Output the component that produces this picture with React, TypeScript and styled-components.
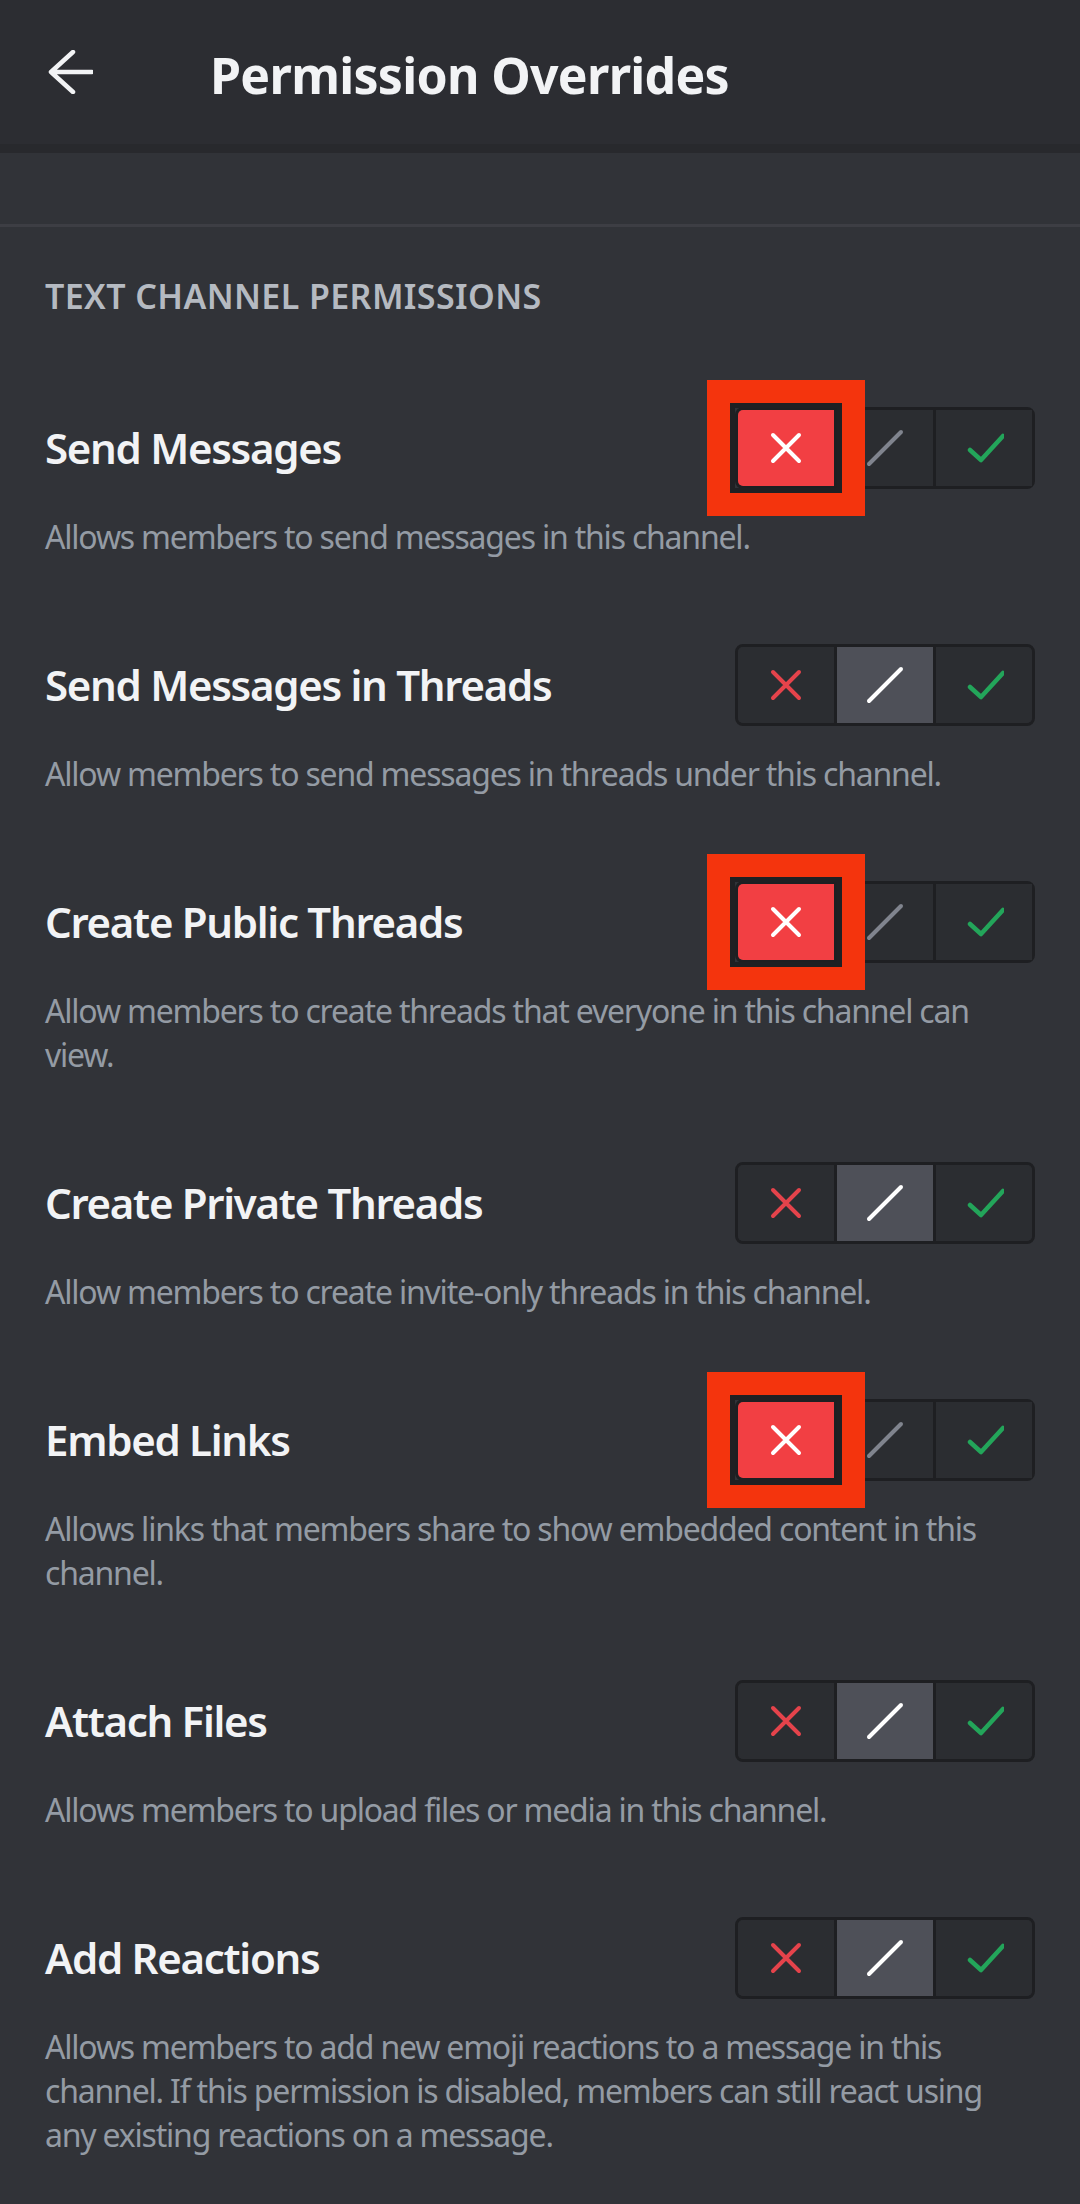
import React from 'react';
import styled, { createGlobalStyle } from 'styled-components';

const GlobalStyle = createGlobalStyle`
  html, body {
    margin: 0;
    padding: 0;
    background: #313338;
    overflow: hidden;
  }
  body {
    font-family: "Noto Sans", "DejaVu Sans", sans-serif;
    -webkit-font-smoothing: antialiased;
  }
  * { box-sizing: border-box; }
`;

const Screen = styled.div`
  width: 1080px;
  height: 2204px;
  overflow: hidden;
  background: #313338;
  display: flex;
  flex-direction: column;
`;

const TopBar = styled.header`
  height: 153px;
  flex-shrink: 0;
  background: #2c2d32;
  border-bottom: 9px solid #28292d;
  display: flex;
  align-items: center;
  padding-left: 48px;
  gap: 117px;
`;

const BackButton = styled.button`
  width: 45px;
  height: 44px;
  padding: 0;
  border: none;
  background: transparent;
  display: flex;
  align-items: center;
  justify-content: center;
  cursor: pointer;
`;

const PageTitle = styled.h1`
  margin: 0;
  font-size: 50px;
  line-height: 60px;
  font-weight: 700;
  color: #f2f3f5;
  letter-spacing: -0.7px;
  transform: translateY(3px);
`;

const Divider = styled.div`
  height: 74px;
  flex-shrink: 0;
  border-bottom: 3px solid #3d3e44;
`;

const Section = styled.section`
  padding: 0 45px;
  display: flex;
  flex-direction: column;
`;

const SectionLabel = styled.h2`
  margin: 49px 0 0;
  font-size: 34px;
  line-height: 40px;
  font-weight: 600;
  color: #b5bac1;
  text-transform: uppercase;
  letter-spacing: 0.4px;
`;

const List = styled.div`
  margin-top: 91px;
  display: flex;
  flex-direction: column;
`;

const Row = styled.div`
  padding-bottom: 85px;
  display: flex;
  flex-direction: column;
`;

const RowHead = styled.div`
  height: 82px;
  display: flex;
  align-items: center;
  justify-content: space-between;
`;

const RowTitle = styled.div`
  font-size: 42px;
  line-height: 52px;
  font-weight: 600;
  color: #f2f3f5;
  letter-spacing: -1.3px;
`;

const RowDesc = styled.p`
  margin: 26px 0 0;
  font-size: 32px;
  line-height: 44px;
  font-weight: 400;
  color: #949ba4;
  letter-spacing: -1.2px;
`;

const ToggleGroup = styled.div`
  position: relative;
  width: 300px;
  height: 82px;
  flex-shrink: 0;
  display: flex;
  border: 3px solid #1e1f22;
  border-radius: 8px;
  background: #2b2d31;
`;

type Tone = 'deny' | 'neutral' | 'allow';

const Segment = styled.div<{ $active: boolean; $tone: Tone }>`
  flex: 1;
  display: flex;
  align-items: center;
  justify-content: center;
  background: ${(p) =>
    !p.$active ? '#2b2d31' : p.$tone === 'deny' ? '#f23f43' : p.$tone === 'allow' ? '#23a55a' : '#4e5058'};
  & + & {
    border-left: 3px solid #1e1f22;
  }
  &:first-child {
    border-radius: 5px 0 0 5px;
  }
  &:last-child {
    border-radius: 0 5px 5px 0;
  }
`;

const Highlight = styled.div`
  position: absolute;
  left: -31px;
  top: -30px;
  width: 158px;
  height: 136px;
  border: 23px solid #f4340d;
  box-shadow: inset 0 0 0 5px #1f2023;
  pointer-events: none;
`;

const XIcon = ({ color }: { color: string }) => (
  <svg width="40" height="40" viewBox="0 0 40 40" fill="none">
    <path d="M7 7 L33 33 M33 7 L7 33" stroke={color} strokeWidth="4" strokeLinecap="round" />
  </svg>
);

const SlashIcon = ({ color }: { color: string }) => (
  <svg width="40" height="40" viewBox="0 0 40 40" fill="none">
    <path d="M4 36 L36 4" stroke={color} strokeWidth="4" strokeLinecap="round" />
  </svg>
);

const CheckIcon = ({ color }: { color: string }) => (
  <svg width="40" height="40" viewBox="0 0 40 40" fill="none">
    <path d="M6 22 L17 32 L39 8" stroke={color} strokeWidth="4.5" strokeLinecap="round" strokeLinejoin="round" />
  </svg>
);

const BackArrow = () => (
  <svg width="45" height="44" viewBox="0 0 45 44" fill="none">
    <path d="M25 2 L3 22 L25 42 M3 22 L44 22" stroke="#f2f3f5" strokeWidth="4.5" strokeLinecap="round" strokeLinejoin="round" />
  </svg>
);

type Perm = { title: string; desc: string; value: 'deny' | 'neutral' };

const perms: Perm[] = [
  { title: 'Send Messages', desc: 'Allows members to send messages in this channel.', value: 'deny' },
  { title: 'Send Messages in Threads', desc: 'Allow members to send messages in threads under this channel.', value: 'neutral' },
  { title: 'Create Public Threads', desc: 'Allow members to create threads that everyone in this channel can view.', value: 'deny' },
  { title: 'Create Private Threads', desc: 'Allow members to create invite-only threads in this channel.', value: 'neutral' },
  { title: 'Embed Links', desc: 'Allows links that members share to show embedded content in this channel.', value: 'deny' },
  { title: 'Attach Files', desc: 'Allows members to upload files or media in this channel.', value: 'neutral' },
  {
    title: 'Add Reactions',
    desc: 'Allows members to add new emoji reactions to a message in this channel. If this permission is disabled, members can still react using any existing reactions on a message.',
    value: 'neutral',
  },
];

const PermToggle = ({ value }: { value: 'deny' | 'neutral' }) => {
  const denied = value === 'deny';
  return (
    <ToggleGroup>
      <Segment $tone="deny" $active={denied}>
        <XIcon color={denied ? '#ffffff' : '#e5434b'} />
      </Segment>
      <Segment $tone="neutral" $active={!denied}>
        <SlashIcon color={denied ? '#80848e' : '#ffffff'} />
      </Segment>
      <Segment $tone="allow" $active={false}>
        <CheckIcon color="#23a55a" />
      </Segment>
      {denied && <Highlight />}
    </ToggleGroup>
  );
};

export default function App() {
  return (
    <>
      <GlobalStyle />
      <Screen>
        <TopBar>
          <BackButton aria-label="Back">
            <BackArrow />
          </BackButton>
          <PageTitle>Permission Overrides</PageTitle>
        </TopBar>
        <Divider />
        <Section>
          <SectionLabel>Text Channel Permissions</SectionLabel>
          <List>
            {perms.map((p) => (
              <Row key={p.title}>
                <RowHead>
                  <RowTitle>{p.title}</RowTitle>
                  <PermToggle value={p.value} />
                </RowHead>
                <RowDesc>{p.desc}</RowDesc>
              </Row>
            ))}
          </List>
        </Section>
      </Screen>
    </>
  );
}
